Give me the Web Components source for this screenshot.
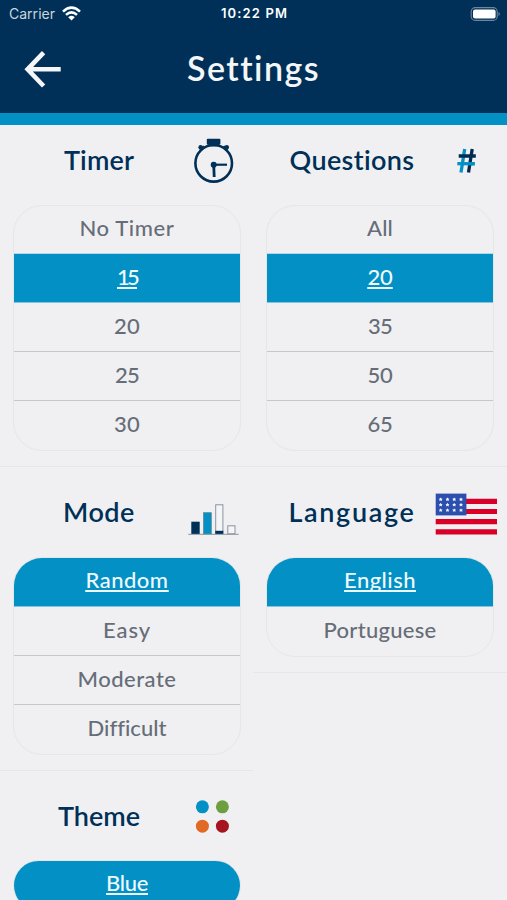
<!DOCTYPE html>
<html lang="en">
<head>
<meta charset="utf-8">
<title>Settings</title>
<style>
html,body{margin:0;height:900px;overflow:hidden;background:#f0f0f2}
body{font-family:Lato,"Liberation Sans",sans-serif;--navy:#003057;--blue:#0390c4;--grey:#666d78;--line:#e5e6e8}
</style>
</head>
<body>
<settings-app></settings-app>
<script>
// Text whose tracking is adjusted so that it occupies a given width.
class FitText extends HTMLElement{
  connectedCallback(){
    const root=this.attachShadow({mode:'open'});
    root.innerHTML='<style>:host{display:inline-block;white-space:nowrap;line-height:1}span{text-decoration:inherit;font-variant-ligatures:none}</style><span><slot></slot></span>';
    const span=root.querySelector('span');
    const width=+this.getAttribute('w');
    const n=this.textContent.length;
    if(width)span.style.letterSpacing=(width-span.getBoundingClientRect().width)/n+'px';
  }
}
customElements.define('fit-text',FitText);

class StatusBar extends HTMLElement{
  connectedCallback(){
    this.attachShadow({mode:'open'}).innerHTML=`<style>
    :host{display:grid;grid-template-columns:1fr auto 1fr;height:27px;align-items:center;padding:0 7px 0 9px;box-sizing:border-box;color:#fff;font:600 13px Inter,sans-serif}
    .left{display:flex;align-items:center;gap:7px;font-weight:400;font-size:14px;color:#cbd5dd}
    .right{justify-self:end;display:flex}
    svg{display:block}
    </style>
    <div class="left"><fit-text w="46">Carrier</fit-text>
    <svg width="19" height="15" viewBox="0 0 19 15" fill="none" stroke="#fff" stroke-width="2.6"><path d="M1 5.6Q9.5-2.2 18 5.6M4 8.9Q9.5 4 15 8.9"/><path d="M6.2 11.2Q9.5 8.4 12.8 11.2L9.5 14.6Z" fill="#fff" stroke="none"/></svg></div>
    <fit-text w="67">10:22 PM</fit-text>
    <div class="right"><svg width="30" height="14" viewBox="0 0 30 14"><rect x="1.2" y=".6" width="26" height="12.8" rx="4" fill="none" stroke="#6d879d" stroke-width="1.1"/><rect x="3" y="2.6" width="22.6" height="8.9" rx="2" fill="#fff"/><path d="M28.5 5v4q1.3-.7 1.3-2t-1.3-2" fill="#6d879d"/></svg></div>`;
  }
}
customElements.define('status-bar',StatusBar);

class AppHeader extends HTMLElement{
  connectedCallback(){
    this.attachShadow({mode:'open'}).innerHTML=`<style>
    :host{display:block;box-sizing:border-box;height:125px;background:var(--navy);border-bottom:12.5px solid var(--blue)}
    .bar{display:grid;grid-template-columns:80px 1fr 80px;height:85px;align-items:center}
    svg{display:block;margin-left:22px}
    .title{text-align:center;color:#f4f6f8;font-size:34px;font-weight:600;padding-bottom:4px}
    </style><status-bar></status-bar>
    <div class="bar"><svg width="42" height="40" viewBox="0 0 42 40" fill="none" stroke="#f4f6f8" stroke-width="4.6"><path d="M38.7 19.3H6M21.6 2.6L5.6 19.3L21.6 36"/></svg><div class="title"><fit-text w="133">Settings</fit-text></div></div>`;
  }
}
customElements.define('app-header',AppHeader);

const icons={
timer:`<g fill="none" stroke="#003057"><circle cx="31.7" cy="38.3" r="18.3" stroke-width="2.6"/><path d="M31.7 39.7H45" stroke-width="2.2"/><path d="M31.7 39.7L32.2 52" stroke-width="2.8"/><path d="M18.3 25.2L22.3 21.5M41.2 21.5L45.2 25.2" stroke-width="3"/></g><g fill="#003057"><circle cx="31.7" cy="39.7" r="3"/><rect x="24.8" y="13.8" width="13.6" height="6" rx="1"/><rect x="26.5" y="18" width="10.4" height="3.4"/><circle cx="18.6" cy="22.2" r="2.2"/><circle cx="44.8" cy="22.2" r="2.2"/></g>`,
hash:`<g fill="none" stroke-width="3.3"><path d="M29.7 24L26 47.6" stroke="#0390c4"/><path d="M22.3 38.7H39.7" stroke="#0390c4"/><path d="M37.2 24L33.5 47.6M23.7 31H40.8" stroke="#002b50"/><path d="M33 38.7H39.7" stroke="#0390c4"/></g>`,
bars:`<rect x="9.3" y="44.7" width="8.4" height="12.3" fill="#003057"/><rect x="21.5" y="35.7" width="7.8" height="21.3" fill="#0390c4" stroke="#5a7388" stroke-width=".6"/><g fill="#f5f5f7" stroke="#8794a1" stroke-width="1"><rect x="33.7" y="27.8" width="7.2" height="29"/><rect x="45.8" y="48.8" width="7.2" height="8"/></g><rect x="33.3" y="53.8" width="8" height="3.2" fill="#003057"/><path d="M6.3 57.3H56.7" stroke="#8794a1" stroke-width="1"/>`,
flag:`<g fill="#d80027"><path d="M31 21.7H62V27H31zM31 32H62V37.1H31zM.7 42.1H62V47.3H.7zM.7 52.3H62V57.5H.7z"/></g><rect x=".7" y="16.6" width="30.7" height="21.8" fill="#2c4fae"/><g fill="#edf2ff">${[22.3,27.7,33.1].map(y=>[5.7,12.5,19.2,26].map(x=>`<path d="M${x} ${y-1.9}l.7 1.2 1.2.1-.8 1 .3 1.3-1.4-.6-1.4.6.3-1.3-.8-1 1.2-.1z"/>`).join('')).join('')}</g>`,
theme:`<circle cx="20.4" cy="25.8" r="6.5" fill="#0390c4"/><circle cx="40.4" cy="25.8" r="6.5" fill="#6d9f40"/><circle cx="20.4" cy="45.2" r="6.5" fill="#e06a24"/><circle cx="40.4" cy="45.2" r="6.5" fill="#a5141f"/>`
};

class SettingIcon extends HTMLElement{
  connectedCallback(){
    this.attachShadow({mode:'open'}).innerHTML=`<style>:host{display:block;width:62px;height:80px}svg{display:block}</style><svg width="62" height="80" viewBox="0 0 62 80">${icons[this.getAttribute('name')]}</svg>`;
  }
}
customElements.define('setting-icon',SettingIcon);

class OptionRow extends HTMLElement{
  connectedCallback(){
    this.attachShadow({mode:'open'}).innerHTML=`<style>
    :host{display:flex;box-sizing:border-box;height:49px;justify-content:center;align-items:center;padding-bottom:3px;border-bottom:1px solid #c5c7ca;color:var(--grey);font-size:22px;font-weight:500}
    :host([quiet]){height:48px;border-bottom-color:#b6d7e3}
    :host(:last-child){border-bottom-color:transparent}
    :host([selected]){background:var(--blue);color:#effaff;border-bottom-color:#80c5df}
    :host([selected]:first-child){padding-bottom:4px}
    :host([selected]) fit-text{text-decoration:underline;text-decoration-thickness:1.5px;text-underline-offset:2px;text-decoration-skip-ink:none}
    </style><fit-text w="${this.getAttribute('w')}">${this.getAttribute('label')}</fit-text>`;
  }
}
customElements.define('option-row',OptionRow);

class SettingSection extends HTMLElement{
  connectedCallback(){
    this.attachShadow({mode:'open'}).innerHTML=`<style>
    :host{display:block;padding-bottom:15px;border-bottom:1px solid var(--line)}
    .head{display:flex;height:80px;padding:10px 0 0 16px}
    :host([first]) .head{padding-top:0}
    :host([icon=theme]) .head{height:79px}
    .title{width:166px;text-align:center;color:var(--navy);font-size:27px;font-weight:600;padding-top:18px;box-sizing:border-box}
    .list{box-sizing:border-box;width:228px;margin-left:13px;border:1px solid var(--line);border-radius:29px;overflow:hidden}
    </style><div class="head"><div class="title"><fit-text w="${this.getAttribute('w')}">${this.getAttribute('label')}</fit-text></div><setting-icon name="${this.getAttribute('icon')}"></setting-icon></div><div class="list"><slot></slot></div>`;
  }
}
customElements.define('setting-section',SettingSection);

class SettingsApp extends HTMLElement{
  connectedCallback(){
    this.attachShadow({mode:'open'}).innerHTML=`<style>
    :host{display:block;width:507px;height:900px;overflow:hidden}
    main{display:grid;grid-template-columns:253px 254px;align-items:start}
    </style><app-header></app-header><main>
    <div>
    <setting-section first label="Timer" w="70" icon="timer"><option-row quiet label="No Timer" w="95"></option-row><option-row selected label="15" w="20"></option-row><option-row label="20" w="26"></option-row><option-row label="25" w="24"></option-row><option-row label="30" w="26"></option-row></setting-section>
    <setting-section label="Mode" w="72" icon="bars"><option-row selected label="Random" w="83"></option-row><option-row label="Easy" w="48"></option-row><option-row label="Moderate" w="99"></option-row><option-row label="Difficult" w="79"></option-row></setting-section>
    <setting-section label="Theme" w="82" icon="theme"><option-row selected label="Blue" w="42"></option-row></setting-section>
    </div><div>
    <setting-section first label="Questions" w="125" icon="hash"><option-row quiet label="All" w="26"></option-row><option-row selected label="20" w="25"></option-row><option-row label="35" w="24"></option-row><option-row label="50" w="25"></option-row><option-row label="65" w="25"></option-row></setting-section>
    <setting-section label="Language" w="127" icon="flag"><option-row selected label="English" w="72"></option-row><option-row label="Portuguese" w="113"></option-row></setting-section>
    </div></main>`;
  }
}
customElements.define('settings-app',SettingsApp);
</script>
</body>
</html>
